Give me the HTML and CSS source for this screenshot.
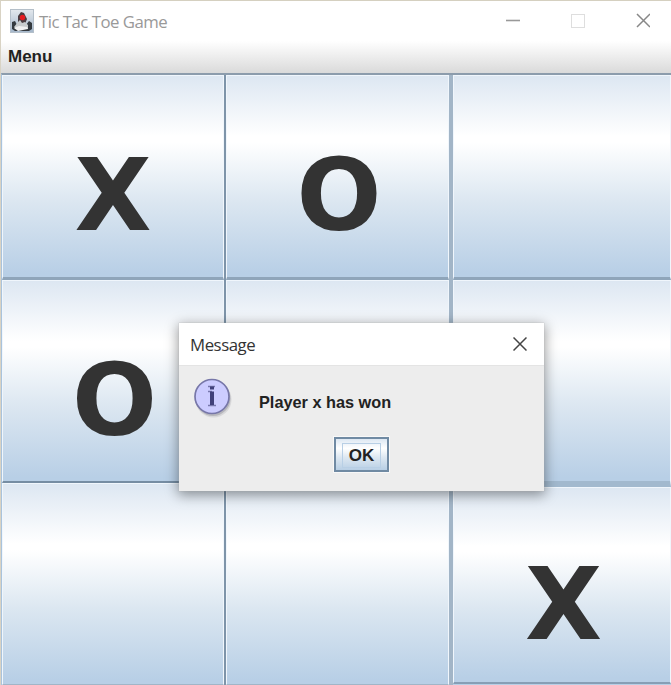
FILE: index.html
```html
<!DOCTYPE html>
<html lang="en">
<head>
<meta charset="utf-8">
<title>Tic Tac Toe Game</title>
<link rel="stylesheet" href="styles.css">
</head>
<body>
<div class="window">
  <header class="titlebar">
    <svg class="app-icon" viewBox="0 0 24 24">
      <defs><linearGradient id="tile" x2="0" y2="1"><stop stop-color="#e3e8ed"/><stop offset="1" stop-color="#a3b6ca"/></linearGradient></defs>
      <rect x=".5" y=".5" width="23" height="23" fill="url(#tile)" stroke="#b4bfc9"/>
      <path d="M2 13 5 12 7 16 16 16 19 12 22 14 22 20 19 22 5 22 2 20Z" fill="#343a3f"/>
      <path d="M8 7 11 3 14 4 17 10 15 15 8 14Z" fill="#4a3c40"/>
      <path d="M8 13 10 11 12 14 15 13 18 16 18 20 6 20 4 18Z" fill="#c8cccd"/>
      <path d="M4 19 9 17 17 18 18 20 8 22Z" fill="#f1f1f1"/>
      <circle cx="12.500" cy="8.500" r="2.700" fill="#e51b20"/>
    </svg>
    <span class="title">Tic Tac Toe Game</span>
    <svg class="controls" viewBox="0 0 150 24" fill="none">
      <path d="M6 11.500h14" stroke="#999" stroke-width="1.600"/>
      <rect x="71.500" y="5.500" width="13" height="13" stroke="#dedede"/>
      <path d="m137 5 13 13m0-13-13 13" stroke="#888" stroke-width="1.500"/>
    </svg>
  </header>
  <nav class="menubar"><span class="menu">Menu</span></nav>
  <main class="board">
    <div class="column">
      <div class="cell"><span class="mark">X</span></div>
      <div class="cell"><span class="mark round">O</span></div>
      <div class="cell"></div>
    </div>
    <div class="column">
      <div class="cell"><span class="mark round">O</span></div>
      <div class="cell"></div>
      <div class="cell"></div>
    </div>
    <div class="column last">
      <div class="cell"></div>
      <div class="cell"></div>
      <div class="cell"><span class="mark">X</span></div>
    </div>
  </main>
  <section class="dialog">
    <div class="dialog-title">
      <span class="dialog-name">Message</span>
      <svg class="close" viewBox="0 0 14 14"><path d="m.5.5 13 13m0-13-13 13" stroke="#444" stroke-width="1.500"/></svg>
    </div>
    <div class="dialog-body">
      <svg class="info" viewBox="0 0 42 42">
        <circle cx="20.500" cy="21.500" r="18" fill="#8b8b94" opacity=".22"/>
        <circle cx="20" cy="20.500" r="17.500" fill="#85858f" opacity=".4"/>
        <circle cx="19" cy="18.500" r="17" fill="#ccccff" stroke="#7777a8" stroke-width="1.700"/>
        <path d="M15 8.500h7M15 13.500h4M15 27.500h8" stroke="#7777ad" stroke-width="1.500" fill="none"/>
        <path d="M17 8.500h4v3h-4zM17 13.500h4V27h-4z" fill="#40407a"/>
      </svg>
      <span class="message">Player x has won</span>
      <button class="ok"><span class="ok-label">OK</span></button>
    </div>
  </section>
</div>
</body>
</html>
```
FILE: styles.css
```css
* { box-sizing: border-box; }
body { margin: 0; overflow: hidden; background: #fff; }
.window {
  position: relative;
  width: 671px;
  height: 685px;
  display: flex;
  flex-direction: column;
  border-top: 1px solid #d5d0c0;
  border-left: 1px solid #d9d3c4;
}
.titlebar {
  height: 40px;
  flex: none;
  display: flex;
  align-items: center;
  padding: 0 21px 0 9px;
}
.app-icon { width: 24px; height: 24px; }
.title {
  margin-left: 5px;
  font: 16.8px "Open Sans", sans-serif;
  letter-spacing: -.52px;
  color: #999;
  white-space: nowrap;
}
.controls { width: 150px; height: 24px; margin-left: auto; }
.menubar {
  height: 32px;
  flex: none;
  display: flex;
  align-items: center;
  padding-left: 7px;
  background: linear-gradient(#fff, #dadada);
}
.menu {
  font: bold 17px "Liberation Sans", sans-serif;
  color: #222;
}
.board {
  flex: 1;
  display: grid;
  grid-template-columns: 224px 227px 1fr;
  border-top: 2px solid #8c9cac;
  border-left: 1px solid #a9c3dd;
}
.column {
  display: grid;
  grid-template-rows: 205px 203px 202px;
  border-right: 2px solid #7e94a9;
}
.column + .column { border-right: 4px solid #a2b5c7; }
.column.last {
  grid-template-rows: 205px 207px 197px;
  border-right: 0;
  background: #b8cfe6;
}
.cell {
  display: flex;
  align-items: center;
  justify-content: center;
  border: solid #f0f6fc;
  border-width: 1px 1px 0 1px;
  border-bottom: 3px solid #8fa5ba;
  background: linear-gradient(#dde7f2, #fff 30%, #fff 33%, #dce7f1 62%, #b8cfe6 98%) padding-box;
}
.cell:nth-child(2) { border-bottom: 2px solid #768da3; }
.cell:last-child { border-bottom: 1px solid #a1b5c7; }
.last .cell:nth-child(2) { border-bottom: 6px solid #a2b9ce; }
.last .cell:last-child { border-bottom: 2px solid #879eb5; }
.mark {
  font: bold 100px/1 "DejaVu Sans", sans-serif;
  color: #333;
  padding-top: 39px;
}
.round { padding-left: 3px; }
.last .mark { padding-left: 3px; }
.dialog {
  position: absolute;
  left: 178px;
  top: 322px;
  width: 365px;
  height: 168px;
  background: #ededed;
  box-shadow: 0 0 1px #aaa, 0 3px 12px 1px rgba(0, 0, 0, .4);
}
.dialog-title {
  height: 43px;
  display: flex;
  align-items: center;
  justify-content: space-between;
  padding: 0 17px 0 11px;
  background: #fff;
  border-bottom: 1px solid #e4e4e4;
}
.dialog-name {
  font: 16.8px "Open Sans", sans-serif;
  letter-spacing: -.45px;
  color: #333;
}
.close { width: 14px; height: 14px; }
.dialog-body {
  display: grid;
  grid-template-columns: 42px 1fr;
  grid-template-rows: 42px 37px;
  column-gap: 23px;
  row-gap: 17px;
  padding: 12px 14px;
}
.info { width: 42px; height: 42px; }
.message {
  align-self: center;
  padding: 6px 0 0 1px;
  font: bold 16.3px "Liberation Sans", sans-serif;
  color: #222;
}
.ok {
  grid-column: 1 / -1;
  justify-self: center;
  width: 55px;
  height: 35px;
  padding: 4px 9px;
  border: 2px solid #708aa3;
  outline: 1px solid #f8f8f8;
  background: linear-gradient(#dde8f3, #fff 30%, #dce7f1 60%, #b8cfe5);
}
.ok-label {
  display: block;
  border: 1px solid #b8cfe5;
  font: bold 17px/23px "Liberation Sans", sans-serif;
  color: #222;
  text-align: center;
  margin: 0 -3px;
}
```
